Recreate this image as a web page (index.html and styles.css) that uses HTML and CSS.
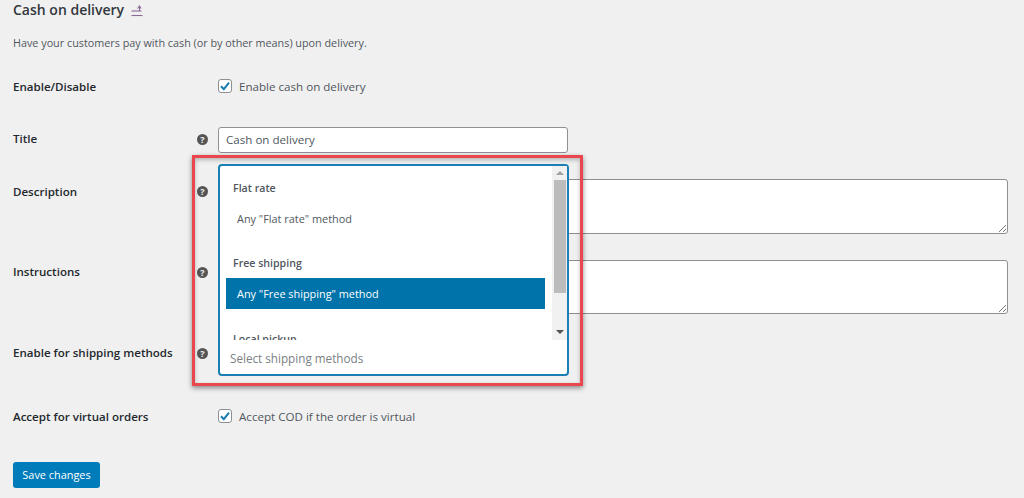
FILE: index.html
```html
<!DOCTYPE html>
<html lang="en">
<head>
<meta charset="utf-8">
<title>Cash on delivery</title>
<link rel="stylesheet" href="styles.css">
</head>
<body>
<main class="page">
  <h2 class="heading">Cash on delivery
    <svg class="back-icon" width="14" height="14" viewBox="0 0 14 14" fill="none" stroke="#8a6a98" stroke-width="1.1"><path d="M1.5 12.5h11"/><path d="M1.5 8h10"/><path d="M7.5 5.5l2-2.5 1.5 2.5"/><path d="M9.5 3.5v4.5"/></svg>
  </h2>
  <p class="intro">Have your customers pay with cash (or by other means) upon delivery.</p>

  <div class="row row-check">
    <div class="label">Enable/Disable</div>
    <div class="help"></div>
    <label class="check"><span class="box"><svg width="12" height="12" viewBox="0 0 12 12" fill="none" stroke="#1a7cb0" stroke-width="2"><path d="M2 6.3l2.8 2.9L10 2.6"/></svg></span>Enable cash on delivery</label>
  </div>

  <div class="row row-title">
    <div class="label label-title">Title</div>
    <div class="help"><span class="help-tip">?</span></div>
    <div class="input">Cash on delivery</div>
  </div>

  <div class="row row-area">
    <div class="label label-top">Description</div>
    <div class="help help-top"><span class="help-tip">?</span></div>
    <div class="textarea"><svg class="grip" width="9" height="9" viewBox="0 0 9 9" stroke="#777" stroke-width="1"><path d="M1 8l7-7M5 8l3-3"/></svg></div>
  </div>

  <div class="row row-area row-area-2">
    <div class="label label-top">Instructions</div>
    <div class="help help-top"><span class="help-tip">?</span></div>
    <div class="textarea"><svg class="grip" width="9" height="9" viewBox="0 0 9 9" stroke="#777" stroke-width="1"><path d="M1 8l7-7M5 8l3-3"/></svg></div>
  </div>

  <div class="row row-ship">
    <div class="label">Enable for shipping methods</div>
    <div class="help"><span class="help-tip">?</span></div>
  </div>

  <div class="row row-virtual">
    <div class="label">Accept for virtual orders</div>
    <div class="help"></div>
    <label class="check"><span class="box"><svg width="12" height="12" viewBox="0 0 12 12" fill="none" stroke="#1a7cb0" stroke-width="2"><path d="M2 6.3l2.8 2.9L10 2.6"/></svg></span>Accept COD if the order is virtual</label>
  </div>

  <button class="save">Save changes</button>

  <div class="callout">
    <div class="select">
      <div class="list">
        <div class="options">
          <div class="group group-first">Flat rate</div>
          <div class="option">Any "Flat rate" method</div>
          <div class="group">Free shipping</div>
          <div class="option option-selected">Any "Free shipping" method</div>
          <div class="group group-last">Local pickup</div>
        </div>
        <div class="scrollbar">
          <span class="arrow-up"></span>
          <span class="thumb"></span>
          <span class="arrow-down"></span>
        </div>
      </div>
      <div class="placeholder">Select shipping methods</div>
    </div>
  </div>
</main>
</body>
</html>
```
FILE: styles.css
```css
* { box-sizing: border-box; }
html, body { margin: 0; height: 100%; }
body {
  background: #f0f0f0;
  color: #50575e;
  font-family: "Open Sans", "Noto Sans", sans-serif;
  font-size: 12px;
  overflow: hidden;
}
.page {
  position: relative;
  height: 498px;
  padding: 0 16px 0 13px;
}
.heading {
  display: flex;
  align-items: center;
  gap: 6px;
  margin: 0;
  height: 18px;
  font-size: 14px;
  font-weight: 600;
  color: #32373c;
}
.back-icon { margin-top: 1px; }
.intro {
  margin: 15px 0 21px;
  height: 20px;
  line-height: 20px;
  font-size: 10.8px;
  color: #50575e;
}
.row { display: flex; align-items: center; height: 26px; }
.row-title { margin-top: 27px; }
.row-area { margin-top: 26px; height: 55px; align-items: flex-start; }
.row-area-2 { height: 54px; }
.row-ship { margin-top: 26px; }
.row-virtual { margin-top: 38px; }
.label {
  width: 183px;
  margin-bottom: 2px;
  font-weight: 600;
  font-size: 11.55px;
  color: #23282d;
}
.label-title { margin-bottom: 4px; }
.label-top { margin: 5px 0 0; }
.row-area-2 .label-top { margin-top: 4px; }
.help { width: 22px; display: flex; margin-bottom: 2px; }
.help-top { margin: 7px 0 0; }
.row-ship .help { margin-bottom: 0; }
.help-tip {
  width: 11px;
  height: 11px;
  margin-left: 1px;
  border-radius: 50%;
  background: #555;
  color: #f0f0f0;
  font-size: 9px;
  font-weight: 700;
  line-height: 11px;
  text-align: center;
}
.check {
  display: flex;
  align-items: center;
  gap: 7px;
  margin-bottom: 2px;
  font-size: 11.6px;
  color: #50575e;
}
.box {
  display: flex;
  align-items: center;
  justify-content: center;
  width: 14px;
  height: 14px;
  background: #fff;
  border: 1px solid #8c8f94;
  border-radius: 3px;
}
.input {
  width: 350px;
  height: 26px;
  padding-left: 7px;
  line-height: 23px;
  font-size: 11.6px;
  color: #50575e;
  background: #fff;
  border: 1px solid #8c8f94;
  border-radius: 3px;
}
.textarea {
  position: relative;
  flex: 1;
  height: 100%;
  max-width: 790px;
  background: #fff;
  border: 1px solid #8c8f94;
  border-radius: 3px;
}
.grip { position: absolute; right: 0; bottom: 0; }
.save {
  display: block;
  margin-top: 32px;
  width: 87px;
  height: 26px;
  padding: 0 0 2px;
  font: 400 10.9px "Open Sans", "Noto Sans", sans-serif;
  color: #fff;
  background: #007cba;
  border: 0;
  border-radius: 3px;
}
.callout {
  position: absolute;
  left: 192px;
  top: 155px;
  width: 391px;
  height: 231px;
  padding: 6px 11px 6px 23px;
  border: 3px solid #e9474d;
  box-shadow: 0 2px 5px rgba(0, 0, 0, .45), inset 0 2px 4px rgba(0, 0, 0, .25);
}
.select {
  width: 351px;
  height: 212px;
  background: #fff;
  border: 2px solid #1a7fb2;
  border-radius: 4px;
  display: flex;
  flex-direction: column;
}
.list { display: flex; flex: none; height: 174px; overflow: hidden; }
.options { flex: 1; padding: 0 7px 0 6px; }
.group {
  padding-left: 7px;
  height: 30px;
  line-height: 31px;
  font-weight: 600;
  font-size: 10.6px;
  color: #50575e;
}
.group-first { margin-top: 7px; }
.group-last { margin-top: 15px; }
.option {
  height: 31px;
  line-height: 31px;
  padding-left: 11px;
  margin-bottom: 14px;
  font-size: 10.9px;
  color: #50575e;
}
.option-selected { background: #0073aa; color: #fff; margin-bottom: 0; }
.scrollbar {
  width: 15px;
  background: #f1f1f1;
  flex: none;
  display: flex;
  flex-direction: column;
  align-items: center;
}
.thumb { width: 12px; height: 113px; margin-top: 5px; background: #bcbcbc; }
.arrow-up, .arrow-down { width: 0; height: 0; border: 4px solid transparent; border-top-width: 0; border-bottom-width: 0; }
.arrow-up { margin-top: 5px; border-bottom: 4px solid #a0a0a0; }
.arrow-down { margin-top: 37px; border-top: 4px solid #505050; }
.placeholder {
  height: 34px;
  padding: 2px 0 0 10px;
  line-height: 32px;
  font-size: 11.7px;
  color: #7b7f84;
}
```
